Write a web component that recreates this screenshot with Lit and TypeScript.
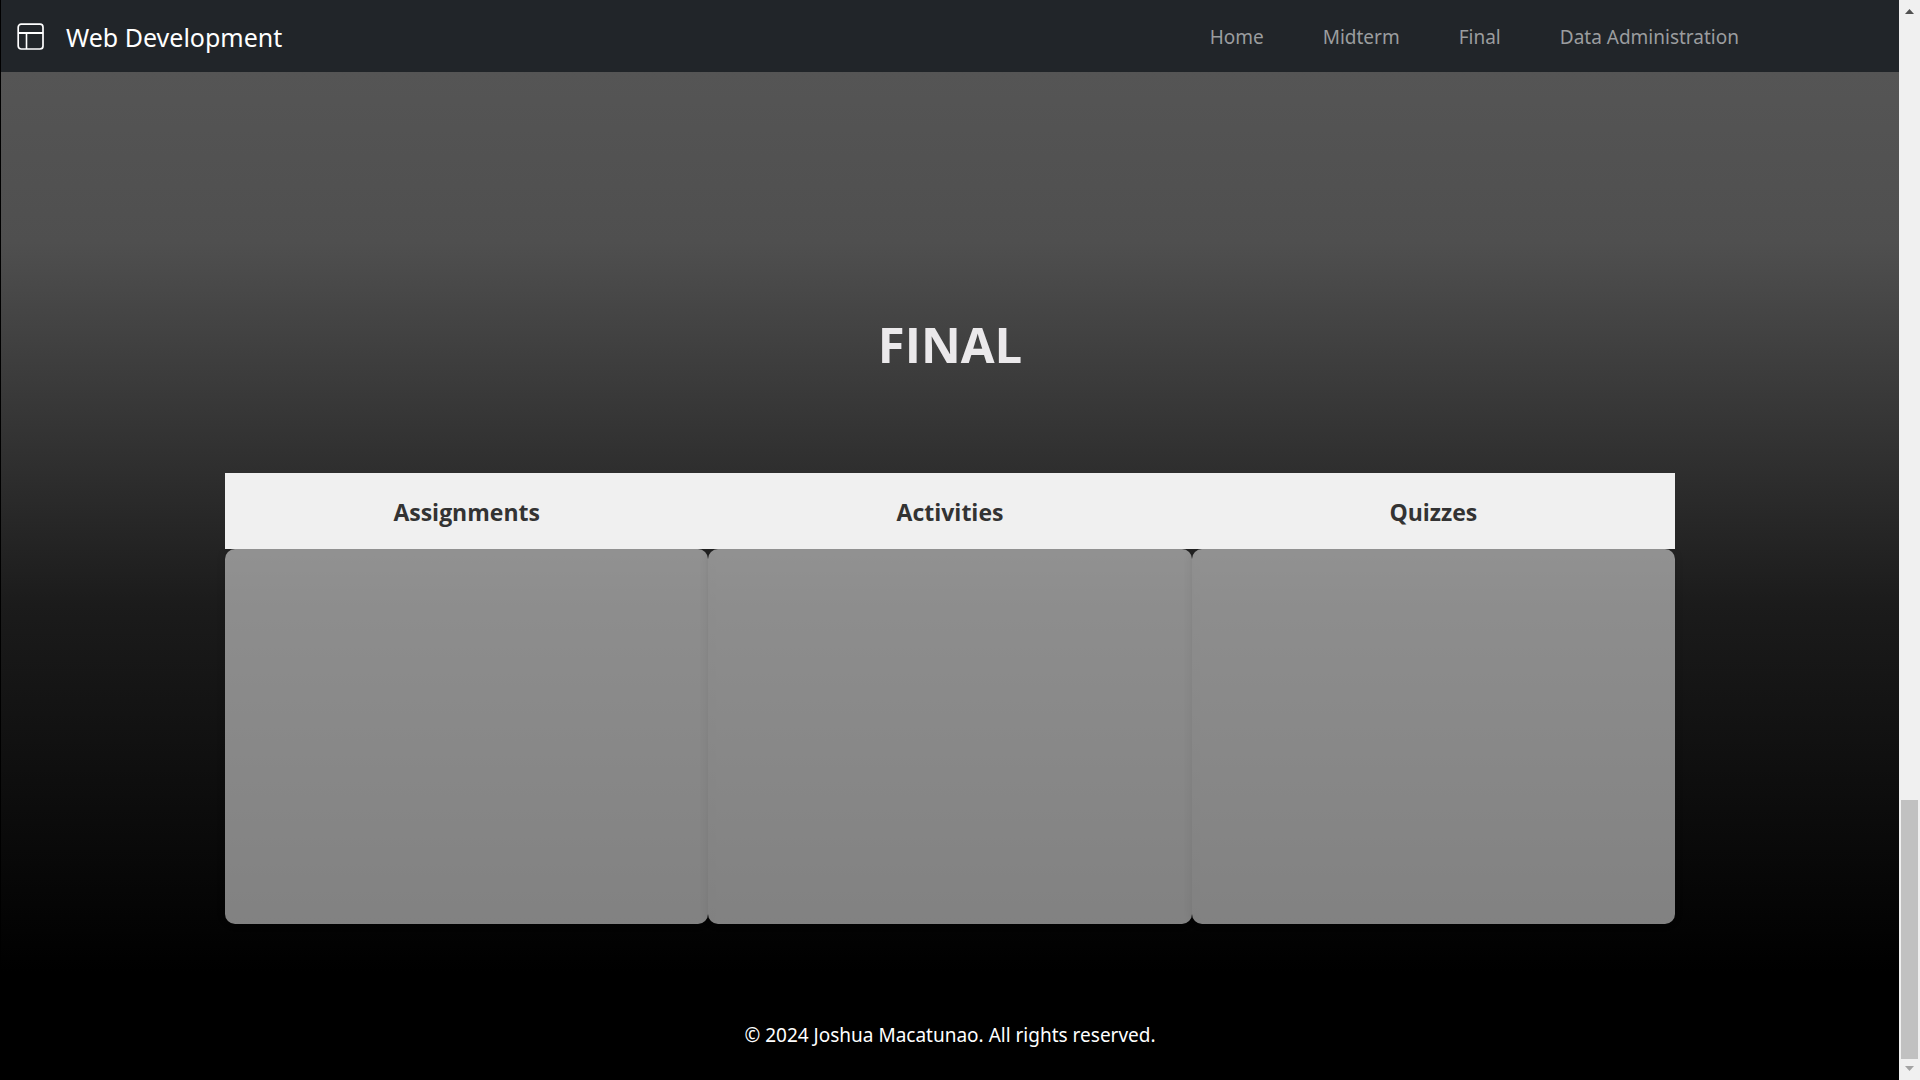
import { LitElement, html, css } from "lit";
import { customElement } from "lit/decorators.js";

@customElement("app-root")
export class AppRoot extends LitElement {
  static styles = css`
    :host {
      display: block;
      font-family: "Segoe UI", "Noto Sans", "Open Sans", sans-serif;
      color: #fff;
    }
    * { box-sizing: border-box; }
    .window { display: flex; min-height: 100vh; background: #000; }
    .page { flex: 1; min-width: 0; display: flex; flex-direction: column; margin-left: 1px; }
    .nav {
      display: flex;
      align-items: center;
      justify-content: space-between;
      height: 72px;
      flex: none;
      padding: 1px 160px 0 16px;
      background: #212529;
    }
    .brand { display: flex; align-items: center; gap: 21px; font-size: 25px; line-height: 34px; color: #fff; text-decoration: none; }
    .logo { width: 28px; height: 28px; display: block; }
    .links { display: flex; gap: 59px; margin: 0; padding: 0; list-style: none; }
    .link { font-size: 19px; line-height: 28px; color: #9b9d9f; text-decoration: none; }
    .final {
      flex: 1;
      display: flex;
      flex-direction: column;
      background: linear-gradient(#555 0, #4f4f4f 170px, #1b1b1b 533px, #000 900px);
    }
    .title,
    .heading {
      font-family: "Segoe UI", "Open Sans", "Noto Sans", sans-serif;
      font-weight: 700;
      text-align: center;
    }
    .title {
      margin: 238px 0 95px;
      font-size: 49px;
      line-height: 68px;
      color: #ebe9eb;
    }
    .columns { display: grid; grid-template-columns: repeat(3, 1fr); padding: 0 224px; }
    .heading {
      z-index: 1;
      margin: 0;
      height: 76px;
      padding-top: 2px;
      background: #f0f0f0;
      color: #333;
      font-size: 23px;
      line-height: 74px;
    }
    .card {
      height: 375px;
      border-radius: 10px;
      background: rgba(255, 255, 255, 0.5);
      box-shadow: 0 0 10px rgba(0, 0, 0, 0.1);
    }
    .footer { margin: auto 0 29px; text-align: center; font-size: 19px; line-height: 32px; }
    .scrollbar {
      width: 21px;
      flex: none;
      display: flex;
      flex-direction: column;
      align-items: center;
      background: #f0f0f0;
    }
    .arrow { width: 21px; height: 21px; display: block; }
    .track { flex: 1; width: 17px; display: grid; grid-template-rows: 3fr 1fr; }
    .thumb { grid-row: 2; background: #c1c1c1; }
  `;

  private links = ["Home", "Midterm", "Final", "Data Administration"];
  private categories = ["Assignments", "Activities", "Quizzes"];

  render() {
    return html`
      <div class="window">
        <div class="page">
          <nav class="nav">
            <a class="brand" href="#">
              <svg class="logo" viewBox="0 0 28 28" fill="none" stroke="#fff" aria-hidden="true">
                <rect x="1.2" y="1.2" width="24.8" height="24.8" rx="3" stroke-width="1.7" />
                <path d="M1 10H26" stroke-width="2" />
                <path d="M9.5 10V26" stroke-width="1.6" />
              </svg>
              Web Development
            </a>
            <ul class="links">
              ${this.links.map((l) => html`<li><a class="link" href="#">${l}</a></li>`)}
            </ul>
          </nav>
          <main class="final">
            <h1 class="title">FINAL</h1>
            <div class="columns">
              ${this.categories.map((c) => html`<h2 class="heading">${c}</h2>`)}
              ${this.categories.map((c) => html`<section class="card" aria-label=${c}></section>`)}
            </div>
            <footer class="footer">© 2024 Joshua Macatunao. All rights reserved.</footer>
          </main>
        </div>
        <div class="scrollbar" aria-hidden="true">
          <svg class="arrow" viewBox="0 0 21 21"><path d="M6 14L10.5 9L15 14Z" fill="#505050" /></svg>
          <div class="track"><div class="thumb"></div></div>
          <svg class="arrow" viewBox="0 0 21 21"><path d="M6 7L10.5 12L15 7Z" fill="#a3a3a3" /></svg>
        </div>
      </div>
    `;
  }
}
